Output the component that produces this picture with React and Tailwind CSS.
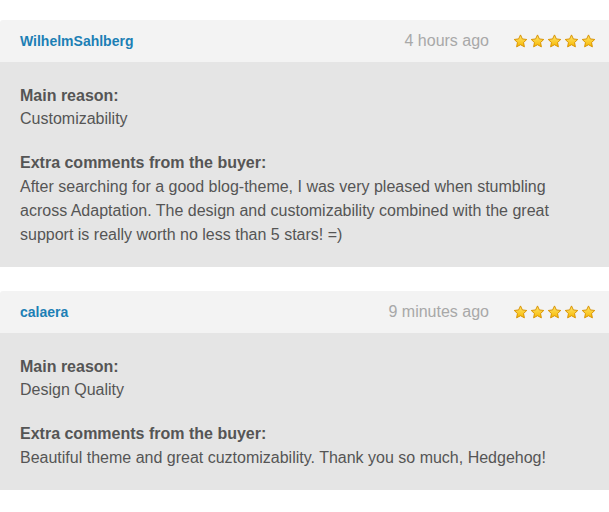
import React from 'react';

const reviews = [
  {
    user: 'WilhelmSahlberg',
    time: '4 hours ago',
    reason: 'Customizability',
    comment:
      'After searching for a good blog-theme, I was very pleased when stumbling across Adaptation. The design and customizability combined with the great support is really worth no less than 5 stars! =)',
  },
  {
    user: 'calaera',
    time: '9 minutes ago',
    reason: 'Design Quality',
    comment: 'Beautiful theme and great cuztomizability. Thank you so much, Hedgehog!',
  },
];

function Star() {
  return (
    <svg width="15" height="14" viewBox="0 0 24 23" className="block">
      <defs>
        <linearGradient id="starfill" x1="0" y1="0" x2="0" y2="1">
          <stop offset="0" stopColor="#ffe66e" />
          <stop offset="1" stopColor="#f7b800" />
        </linearGradient>
      </defs>
      <path
        d="M12 1.5l3.1 6.6 7.2.9-5.3 5 1.4 7.1L12 17.6l-6.4 3.5L7 14l-5.3-5 7.2-.9z"
        fill="url(#starfill)"
        stroke="#d89200"
        strokeWidth="1.6"
        strokeLinejoin="round"
      />
    </svg>
  );
}

function Review({ r }) {
  return (
    <div className="rounded-tl-[3px] overflow-hidden">
      <div className="h-[42px] bg-[#f3f3f3] flex items-center pl-5 pr-[13px]">
        <span className="text-[14px] font-bold text-[#1c7fb5]">{r.user}</span>
        <span className="ml-auto text-[16px] text-[#a8a8a8]">{r.time}</span>
        <div className="flex gap-[2px] ml-6">
          <Star />
          <Star />
          <Star />
          <Star />
          <Star />
        </div>
      </div>
      <div className="bg-[#e5e5e5] px-5 pt-[22px] pb-[20px] text-[16px] leading-[24px] text-[#555555]">
        <div className="font-bold leading-[23px]">Main reason:</div>
        <div className="leading-[23px]">{r.reason}</div>
        <div className="font-bold mt-[21px]">Extra comments from the buyer:</div>
        <div className="pr-10">{r.comment}</div>
      </div>
    </div>
  );
}

export default function App() {
  return (
    <div className="bg-white w-[609px] h-[512px] pt-5 flex flex-col gap-[24px]" style={{ fontFamily: '"Liberation Sans", Arial, sans-serif' }}>
      {reviews.map((r) => (
        <Review key={r.user} r={r} />
      ))}
    </div>
  );
}
